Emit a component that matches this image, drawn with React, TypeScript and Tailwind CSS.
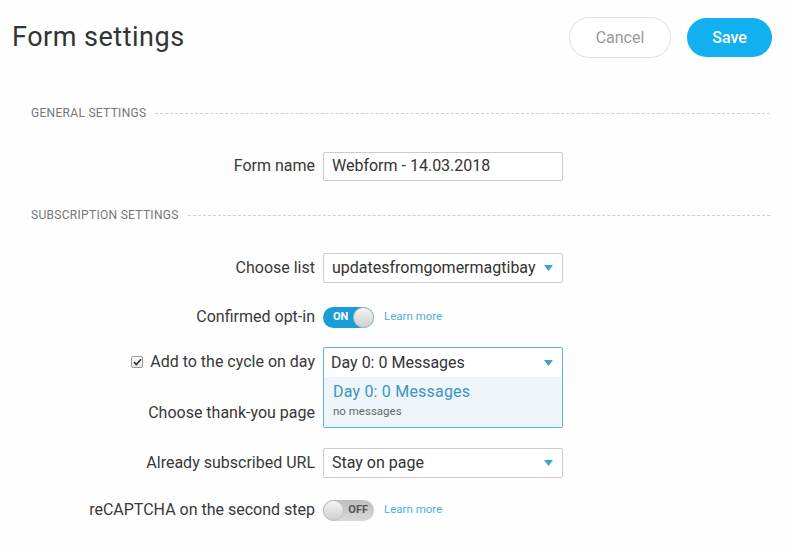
import React from 'react';

function Caret() {
  return (
    <svg width="9" height="6" viewBox="0 0 9 6" className="shrink-0">
      <path d="M0 0h9L4.5 6z" fill="#3ba3cf" />
    </svg>
  );
}

function SectionTitle({ text, className = '' }: { text: string; className?: string }) {
  return (
    <div className={`flex items-center gap-[9px] pl-[31px] pr-[23px] h-[18px] ${className}`}>
      <span className="text-[12px] leading-[18px] uppercase tracking-[0.3px] text-[#777]">{text}</span>
      <div className="flex-1 border-t border-dashed border-[#cfcfcf]" />
    </div>
  );
}

function Row({ label, children, className = '' }: { label: React.ReactNode; children: React.ReactNode; className?: string }) {
  return (
    <div className={`flex items-center h-[30px] ${className}`}>
      <div className="w-[315px] shrink-0 text-right text-[16px] text-[#383838] flex items-center justify-end">{label}</div>
      <div className="ml-[8px] flex items-center">{children}</div>
    </div>
  );
}

function Select({ value }: { value: string }) {
  return (
    <div className="w-[240px] h-[30px] border border-[#ccc] rounded-[2px] bg-white flex items-center justify-between pl-[8px] pr-[9px] text-[16px] text-[#333]">
      <span>{value}</span>
      <Caret />
    </div>
  );
}

function Toggle({ on }: { on: boolean }) {
  if (on) {
    return (
      <div className="w-[51px] h-[21px] rounded-full bg-[#1a9dd6] flex items-center justify-between pl-[10px]">
        <span className="text-[11px] font-bold text-white">ON</span>
        <span className="w-[21px] h-[21px] rounded-full bg-gradient-to-b from-[#f4f4f4] to-[#cfcfcf] border border-[#bdbdbd]" />
      </div>
    );
  }
  return (
    <div className="w-[51px] h-[21px] rounded-full bg-gradient-to-b from-[#bdbdbd] to-[#d9d9d9] flex items-center justify-between pr-[6px]">
      <span className="w-[21px] h-[21px] rounded-full bg-gradient-to-b from-[#f4f4f4] to-[#cfcfcf] border border-[#bdbdbd]" />
      <span className="text-[11px] font-bold text-[#555]">OFF</span>
    </div>
  );
}

function LearnMore() {
  return <span className="ml-[10px] text-[11.5px] text-[#4eaed8]">Learn more</span>;
}

export default function App() {
  return (
    <div className="w-[793px] h-[551px] bg-[#fefefe] font-['Roboto',sans-serif] overflow-hidden">
      {/* header */}
      <div className="flex items-center justify-between pl-[12px] pr-[21px] pt-[17px]">
        <h1 className="text-[27px] font-normal text-[#333] tracking-[0.5px] leading-[41px]">Form settings</h1>
        <div className="flex items-center gap-[16px]">
          <button className="w-[102px] h-[41px] rounded-full border border-[#ddd] bg-white text-[16px] text-[#999]">Cancel</button>
          <button className="w-[85px] h-[39px] rounded-full bg-[#12b0f0] text-[16px] font-medium text-white">Save</button>
        </div>
      </div>

      <SectionTitle text="General settings" className="mt-[46px]" />
      <Row label="Form name" className="mt-[29px]">
        <div className="w-[240px] h-[29px] border border-[#ccc] rounded-[2px] bg-white flex items-center pl-[8px] text-[16px] text-[#333]">
          Webform - 14.03.2018
        </div>
      </Row>

      <SectionTitle text="Subscription settings" className="mt-[25px]" />

      <Row label="Choose list" className="mt-[29px]">
        <Select value="updatesfromgomermagtibay" />
      </Row>

      <Row label="Confirmed opt-in" className="mt-[19px]">
        <Toggle on />
        <LearnMore />
      </Row>

      <div className="relative">
        <Row
          label={
            <>
              <span className="mr-[7px] w-[12px] h-[12px] border border-[#999] rounded-[2px] bg-gradient-to-b from-[#fff] to-[#e6e6e6] flex items-center justify-center">
                <svg width="9" height="8" viewBox="0 0 9 8">
                  <path d="M1 4.2l2.3 2.3L8 1.3" stroke="#333" strokeWidth="1.7" fill="none" />
                </svg>
              </span>
              Add to the cycle on day
            </>
          }
          className="mt-[15px]"
        >
          <div className="w-[240px] h-[30px]" />
        </Row>

        <Row label="Choose thank-you page" className="mt-[21px]">
          <div className="w-[240px] h-[30px]" />
        </Row>

        {/* open dropdown */}
        <div className="absolute left-[323px] top-0 w-[240px] h-[81px] border border-[#5bb4da] rounded-[2px] bg-white flex flex-col">
          <div className="h-[29px] flex items-center justify-between pl-[7px] pr-[9px] text-[16px] text-[#333]">
            <span>Day 0: 0 Messages</span>
            <Caret />
          </div>
          <div className="flex-1 bg-[#eef6fc] pl-[9px] pt-[4px]">
            <div className="text-[16px] text-[#3a95bf] tracking-[0.2px] leading-[22px]">Day 0: 0 Messages</div>
            <div className="text-[11.5px] text-[#666] leading-[17px]">no messages</div>
          </div>
        </div>
      </div>

      <Row label="Already subscribed URL" className="mt-[20px]">
        <Select value="Stay on page" />
      </Row>

      <Row label="reCAPTCHA on the second step" className="mt-[17px]">
        <Toggle on={false} />
        <LearnMore />
      </Row>
    </div>
  );
}
